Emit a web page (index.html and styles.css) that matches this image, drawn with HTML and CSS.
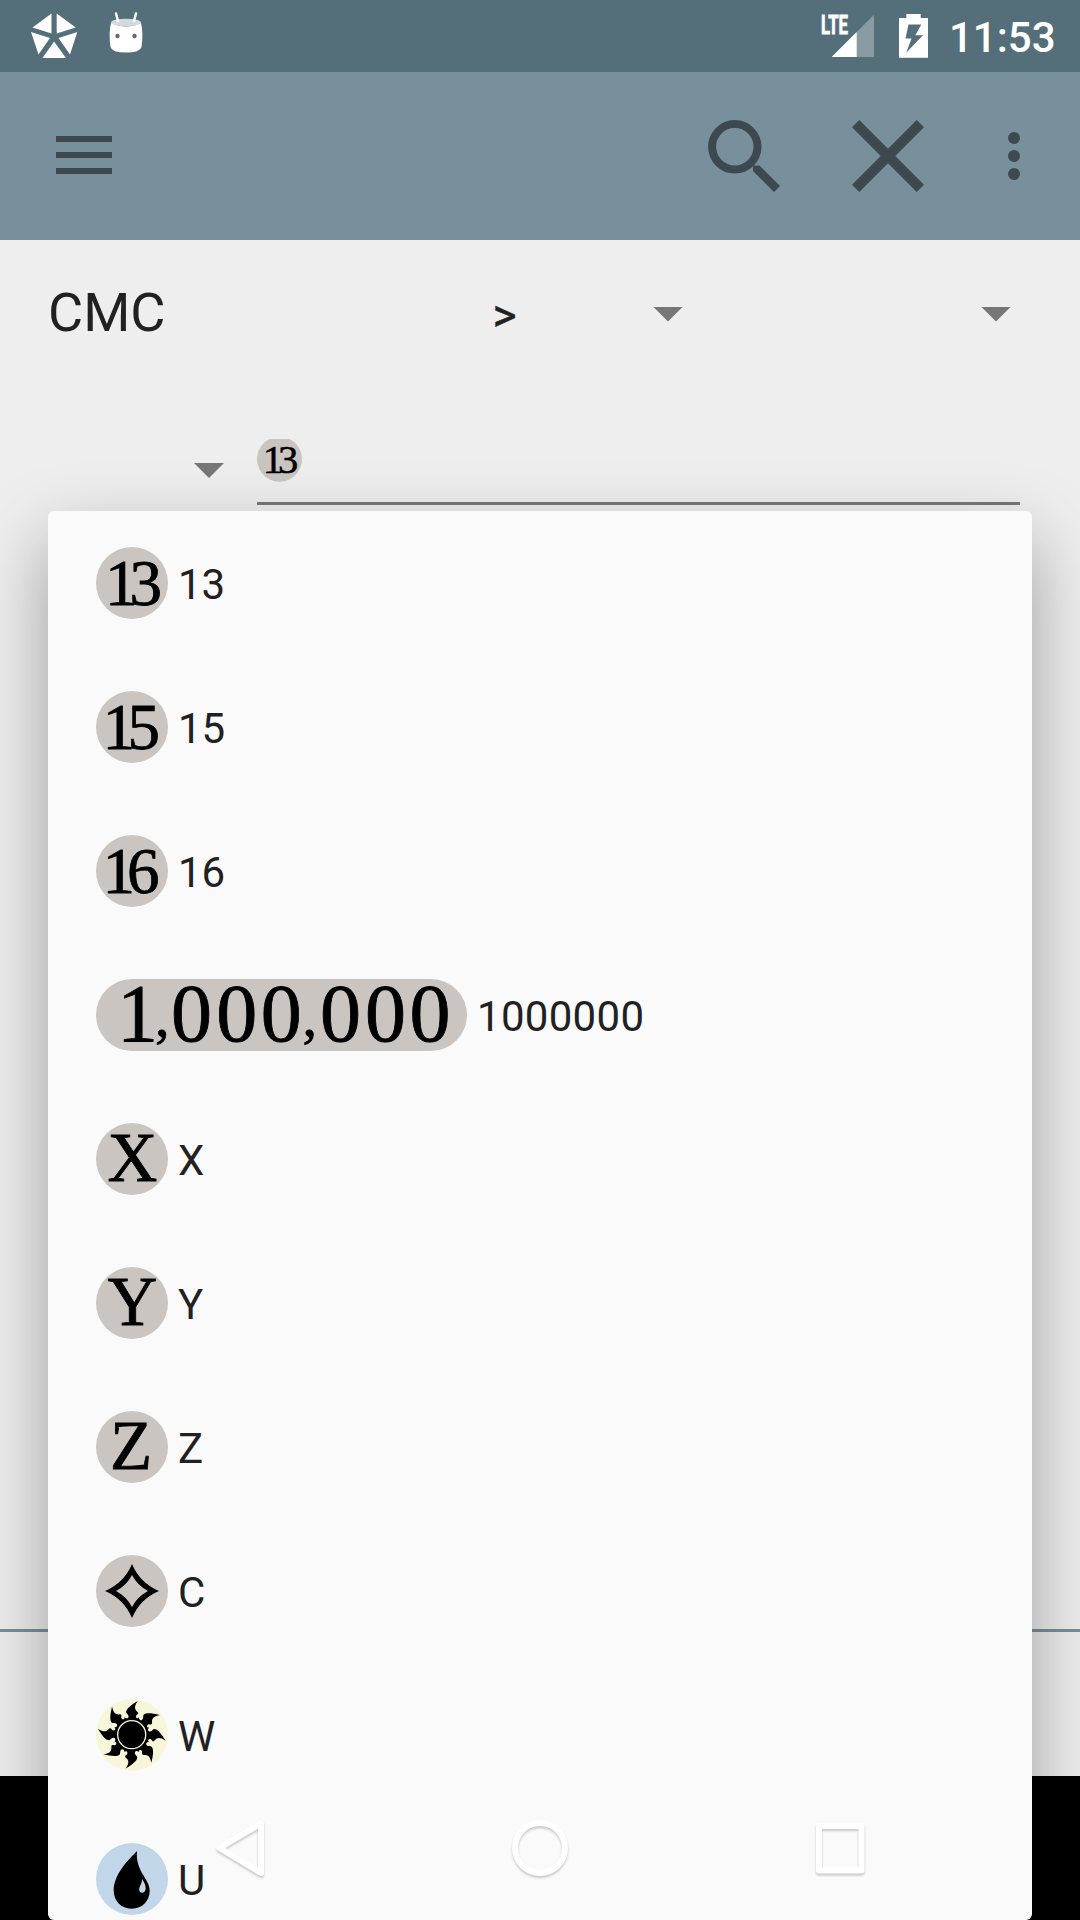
FILE: index.html
```html
<!DOCTYPE html>
<html lang="en">
<head>
<meta charset="utf-8">
<title>Card search</title>
<link rel="stylesheet" href="styles.css">
</head>
<body>
<div class="screen">
  <header class="status-bar">
    <svg class="pentagon" width="48" height="46" viewBox="0 0 48 46"><path d="M21.500 .5V20.500L2.500 14.500ZM26.700 .500V20.500L45.700 14.500ZM1 19L20 25L8.500 41.500ZM47.300 19L28.500 25L40 41.500ZM24 28.500L36 45H12.500Z"/></svg>
    <svg class="droid" width="36" height="42" viewBox="0 0 36 42"><path d="M3 11Q18 18 33 11Q35.500 21 33.500 35Q32 40.500 18 40.500T2.500 35Q.5 21 3 11Z"/><ellipse class="droid-top" cx="18" cy="10.500" rx="15" ry="3.800"/><path class="droid-ears" d="M8 1.500L10 9M28 1.500L26 9"/><circle class="droid-eye" cx="9.500" cy="24" r="2.200"/><circle class="droid-eye" cx="26.500" cy="24" r="2.200"/></svg>
    <div class="status-right">
      <svg width="54" height="44" viewBox="0 0 54 44"><path class="signal-dim" d="M11.700 43L54 .7V43Z"/><path d="M11.700 43L36.700 18V43Z"/><text class="lte" x="1" y="19.500" textLength="27" lengthAdjust="spacingAndGlyphs">LTE</text></svg>
      <svg class="battery" width="29" height="44" viewBox="0 0 29 44"><path fill-rule="evenodd" d="M7.300 0H21.700V4H29V43.700H0V4H7.300ZM9.500 10.500L6.500 24.500H12.500L7.200 38.800L24 21.300H16.300L22.300 10.500Z"/></svg>
      <span class="clock">11:53</span>
    </div>
  </header>
  <nav class="app-bar">
    <svg class="menu" width="56" height="38" viewBox="0 0 56 38"><path d="M0 0H56V6H0ZM0 16H56V22H0ZM0 32H56V38H0Z"/></svg>
    <svg class="search" width="72" height="72" viewBox="0 0 72 72"><circle class="lens" cx="26.800" cy="26.800" r="22.700"/><path d="M43 40L45 45.500H51.500L72 66L66 72L45 51V45.500L40 43Z"/></svg>
    <svg class="close" width="72" height="72" viewBox="0 0 72 72"><path d="M7.300 0L36 28.700L64.700 0L72 7.300L43.300 36L72 64.700L64.700 72L36 43.300L7.300 72L0 64.700L28.700 36L0 7.300Z"/></svg>
    <svg width="12" height="48" viewBox="0 0 12 48"><circle cx="6" cy="6" r="6"/><circle cx="6" cy="24" r="6"/><circle cx="6" cy="42" r="6"/></svg>
  </nav>
  <main class="filters">
    <div class="filter-row">
      <span class="filter-name">CMC</span>
      <div class="spinner"><span class="operator">&gt;</span><i class="caret"></i></div>
      <div class="spinner spinner-value"><i class="caret"></i></div>
    </div>
    <div class="mana-row">
      <i class="caret"></i>
      <div class="mana-input">
        <div class="chip"><svg width="45" height="43" viewBox="0 3.200 72 68.800"><path class="disc" d="M20 3.200H52A36 36 0 1 1 20 3.200Z"/><text class="glyph" x="9 33.500" y="57.500">13</text></svg></div>
      </div>
    </div>
  </main>
  <div class="footer-area"></div>
  <div class="nav-bar"></div>

  <ul class="popup">
    <li class="option"><svg width="72" height="72"><circle class="disc" cx="36" cy="36" r="36"/><text class="glyph" x="9 33.500" y="57.500">13</text></svg><span>13</span></li>
    <li class="option"><svg width="72" height="72"><circle class="disc" cx="36" cy="36" r="36"/><text class="glyph" x="6.500 31.500" y="57.500">15</text></svg><span>15</span></li>
    <li class="option"><svg width="72" height="72"><circle class="disc" cx="36" cy="36" r="36"/><text class="glyph" x="6.500 31" y="58">16</text></svg><span>16</span></li>
    <li class="option"><svg width="371" height="72"><rect class="disc" width="371" height="72" rx="36"/><text class="glyph glyph-million" y="61.500"><tspan x="21">1</tspan><tspan class="comma" x="59" y="57">,</tspan><tspan x="75 120.200 164.700" y="61.500">000</tspan><tspan class="comma" x="206.500" y="57">,</tspan><tspan x="224 269 313.500" y="61.500">000</tspan></text></svg><span class="long">1000000</span></li>
    <li class="option"><svg width="72" height="72"><circle class="disc" cx="36" cy="36" r="36"/><text class="glyph glyph-letter" x="11.500" y="57.500">X</text></svg><span>X</span></li>
    <li class="option"><svg width="72" height="72"><circle class="disc" cx="36" cy="36" r="36"/><text class="glyph glyph-letter" x="11.500" y="57.500">Y</text></svg><span>Y</span></li>
    <li class="option"><svg width="72" height="72"><circle class="disc" cx="36" cy="36" r="36"/><text class="glyph glyph-letter" x="14" y="57.500">Z</text></svg><span>Z</span></li>
    <li class="option"><svg width="72" height="72"><circle class="disc" cx="36" cy="36" r="36"/><path fill-rule="evenodd" d="M36 9Q44 28 63 36Q44 44 36 63Q28 44 9 36Q28 28 36 9ZM36 20Q41.500 30.500 52 36Q41.500 41.500 36 52Q30.500 41.500 20 36Q30.500 30.500 36 20Z"/></svg><span>C</span></li>
    <li class="option"><svg width="72" height="72"><defs><path id="ray" d="M6 -33.800C-1 -29.500 -5.500 -26 -5.600 -22.500C-5 -20.500 -2.500 -20 -3.300 -17.300C-4.200 -15.600 -6 -16.500 -7.500 -17.200L-7 -13H7L6.500 -16C4.500 -16.500 3.700 -18 4.700 -19.500C6 -20.500 7 -21 6.300 -22.500C3.500 -25 1.500 -27 6 -33.800Z"/></defs><circle class="disc-white" cx="36" cy="36" r="36"/><g transform="translate(35.700 35.700)"><use href="#ray"/><use href="#ray" transform="rotate(45)"/><use href="#ray" transform="rotate(90)"/><use href="#ray" transform="rotate(135)"/><use href="#ray" transform="rotate(180)"/><use href="#ray" transform="rotate(225)"/><use href="#ray" transform="rotate(270)"/><use href="#ray" transform="rotate(315)"/><circle class="sun-core" r="14"/></g></svg><span>W</span></li>
    <li class="option"><svg width="72" height="72"><circle class="disc-blue" cx="36" cy="36" r="36"/><path d="M41 8C31 18 17.700 32 17.700 47.500C17.700 58 25 65.700 35.700 65.700S53.700 58 53.700 47.500C53.700 36 39 28 41 8Z"/><path class="shine" d="M46 36Q49.700 41 49.700 45.500C49.500 51 43 51 43.200 46.500C43.500 42.500 46 41 46 36Z"/></svg><span>U</span></li>
  </ul>

  <svg class="nav-buttons" width="1080" height="144" viewBox="0 0 1080 144"><path d="M219.500 72L261 47.500V97Z"/><circle cx="540" cy="72" r="25"/><rect x="819" y="50" width="42.500" height="44.500"/></svg>
</div>
</body>
</html>
```

FILE: styles.css
```css
* { box-sizing: border-box; }

body {
  margin: 0;
  background: #000;
  font-family: Roboto, sans-serif;
  color: #212121;
}

svg { display: block; flex: none; overflow: visible; }

.screen {
  position: relative;
  display: flex;
  flex-direction: column;
  width: 1080px;
  height: 1920px;
  overflow: hidden;
  background: #eee;
}

.status-bar {
  display: flex;
  align-items: flex-start;
  height: 72px;
  padding: 13px 24.500px 0 30px;
  background: #546e7a;
  fill: #fff;
  color: #fff;
}

.droid { margin-left: 30px; margin-top: -1px; }
.droid-top { fill: #d3dade; }
.droid-ears { stroke: #fff; stroke-width: 2.500; stroke-linecap: round; }
.droid-eye { fill: #546e7a; }
.status-right { display: flex; margin-left: auto; margin-top: 1px; }
.signal-dim { fill: #889ba3; }
.lte { font: 700 26px Roboto, sans-serif; stroke: #fff; stroke-width: .8; }
.battery { margin-left: 25px; }
.clock {
  margin-left: 21px;
  font-size: 42px;
  font-weight: 500;
  line-height: 48px;
}

.app-bar {
  display: flex;
  align-items: center;
  height: 168px;
  padding: 0 60px 0 56px;
  background: #78909c;
  fill: #3e494f;
}
.menu { margin-top: -2px; }
.search { margin-left: auto; }
.lens { fill: none; stroke: #3e494f; stroke-width: 8; }
.close { margin: 0 84px 0 72px; }

.filters { flex: none; height: 1389px; }
.filter-row {
  display: grid;
  grid-template-columns: 444px 191px 1fr;
  align-items: center;
  height: 148px;
  padding: 0 69px 0 48px;
}
.filter-name { font-size: 54px; line-height: 64px; padding-bottom: 2px; }
.spinner {
  display: flex;
  align-items: center;
  justify-content: space-between;
}
.spinner-value { justify-content: flex-end; }
.operator {
  padding: 2px 0 0 .5px;
  font-size: 46px;
  line-height: 49px;
  -webkit-text-stroke: .5px #212121;
}
.caret {
  width: 30px;
  height: 15px;
  background: #777;
  clip-path: polygon(0 0, 100% 0, 50% 100%);
}

.mana-row {
  display: flex;
  align-items: flex-start;
  padding: 51px 60px 0 194px;
}
.mana-row .caret { margin-top: 24px; }
.mana-input {
  flex: 1;
  height: 66px;
  margin-left: 33px;
  border-bottom: 3px solid #777;
}
.chip { width: 45px; height: 43px; }

.footer-area { flex: 1; border-top: 3px solid #78909c; }
.nav-bar { flex: none; height: 144px; background: #000; }

.popup {
  position: absolute;
  left: 48px;
  top: 511px;
  width: 984px;
  height: 1409px;
  margin: 0;
  padding: 0;
  list-style: none;
  background: #fafafa;
  border-radius: 6px;
  box-shadow: 0 30px 72px rgba(0, 0, 0, .34);
}
.option {
  display: flex;
  align-items: center;
  gap: 10px;
  height: 144px;
  padding-left: 48px;
  font-size: 42px;
}
.option span { padding-top: 3px; }
.option .long { letter-spacing: .3px; }

.disc { fill: #cac5c0; }
.disc-white { fill: #f8f6d8; }
.disc-blue, .shine { fill: #c1d7e9; }
.sun-core { stroke: #f8f6d8; stroke-width: 1.300; }
.glyph {
  font: 65px "Liberation Serif", serif;
  stroke: #000;
  stroke-width: .8;
}
.glyph-letter { font-size: 69px; }
.glyph-million { font-size: 82px; }
.comma { font-size: 58px; }

.nav-buttons {
  position: absolute;
  left: 0;
  bottom: 0;
  fill: none;
  stroke: #fff;
  stroke-width: 6;
  stroke-linejoin: round;
  filter: drop-shadow(0 2px 1px rgba(0, 0, 0, .2));
}
```
